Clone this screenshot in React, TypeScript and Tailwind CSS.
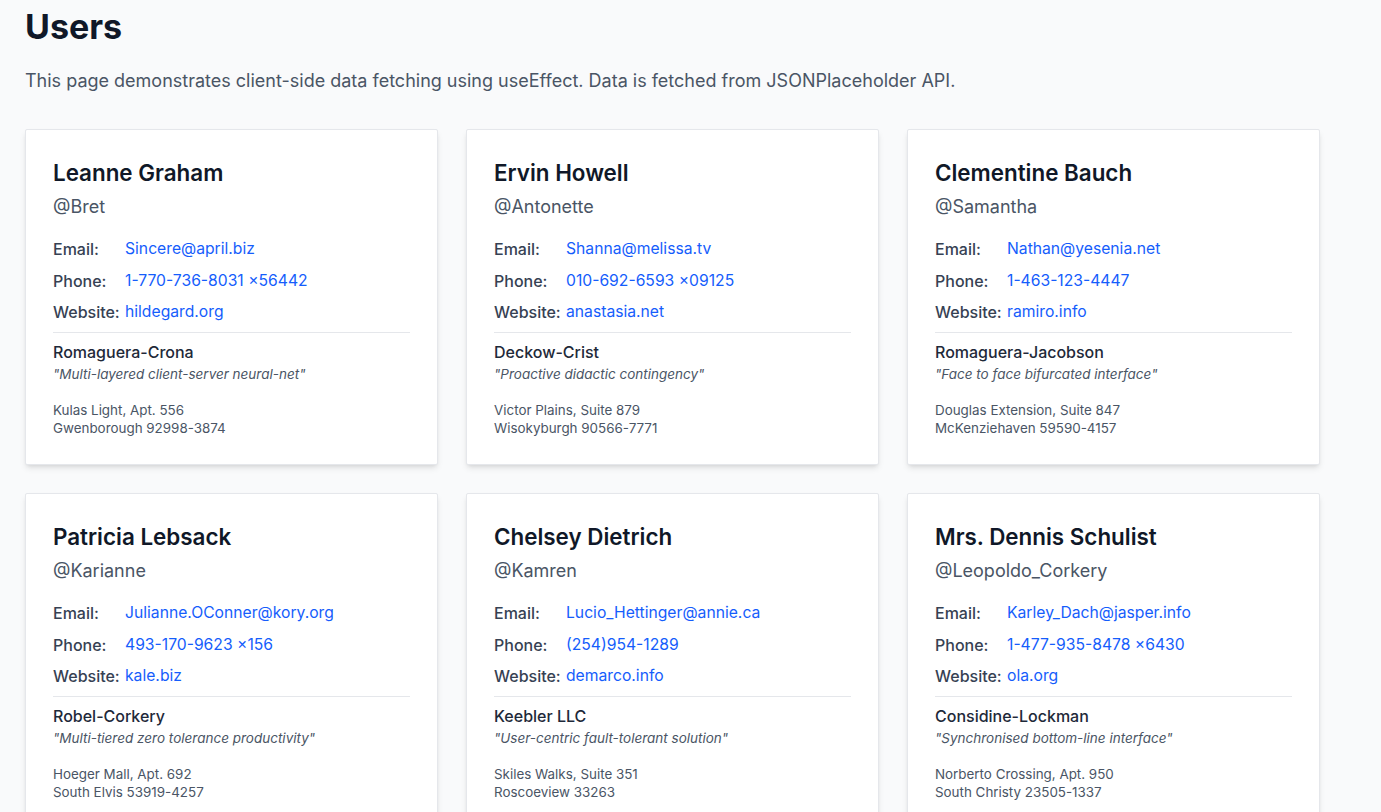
import React from "react";

type User = {
  name: string;
  username: string;
  email: string;
  phone: string;
  website: string;
  company: string;
  catchPhrase: string;
  street: string;
  city: string;
};

const users: User[] = [
  { name: "Leanne Graham", username: "Bret", email: "Sincere@april.biz", phone: "1-770-736-8031 x56442", website: "hildegard.org", company: "Romaguera-Crona", catchPhrase: "Multi-layered client-server neural-net", street: "Kulas Light, Apt. 556", city: "Gwenborough 92998-3874" },
  { name: "Ervin Howell", username: "Antonette", email: "Shanna@melissa.tv", phone: "010-692-6593 x09125", website: "anastasia.net", company: "Deckow-Crist", catchPhrase: "Proactive didactic contingency", street: "Victor Plains, Suite 879", city: "Wisokyburgh 90566-7771" },
  { name: "Clementine Bauch", username: "Samantha", email: "Nathan@yesenia.net", phone: "1-463-123-4447", website: "ramiro.info", company: "Romaguera-Jacobson", catchPhrase: "Face to face bifurcated interface", street: "Douglas Extension, Suite 847", city: "McKenziehaven 59590-4157" },
  { name: "Patricia Lebsack", username: "Karianne", email: "Julianne.OConner@kory.org", phone: "493-170-9623 x156", website: "kale.biz", company: "Robel-Corkery", catchPhrase: "Multi-tiered zero tolerance productivity", street: "Hoeger Mall, Apt. 692", city: "South Elvis 53919-4257" },
  { name: "Chelsey Dietrich", username: "Kamren", email: "Lucio_Hettinger@annie.ca", phone: "(254)954-1289", website: "demarco.info", company: "Keebler LLC", catchPhrase: "User-centric fault-tolerant solution", street: "Skiles Walks, Suite 351", city: "Roscoeview 33263" },
  { name: "Mrs. Dennis Schulist", username: "Leopoldo_Corkery", email: "Karley_Dach@jasper.info", phone: "1-477-935-8478 x6430", website: "ola.org", company: "Considine-Lockman", catchPhrase: "Synchronised bottom-line interface", street: "Norberto Crossing, Apt. 950", city: "South Christy 23505-1337" },
];

function Row({ label, value }: { label: string; value: string }) {
  return (
    <div className="flex h-6 items-center leading-6">
      <span className="w-[72px] shrink-0 text-base font-medium text-gray-700">{label}</span>
      <span className="text-[15.7px] text-blue-600">{value}</span>
    </div>
  );
}

function Card({ u }: { u: User }) {
  return (
    <div className="rounded-[2px] border border-gray-200 bg-white px-[27px] pt-[27px] pb-[27px] shadow-md">
      <h2 className="text-[22.4px] font-semibold leading-8 text-gray-900">{u.name}</h2>
      <p className="mt-1 text-lg leading-7 text-gray-600">@{u.username}</p>
      <div className="mt-4 flex flex-col gap-[7.5px]">
        <Row label="Email:" value={u.email} />
        <Row label="Phone:" value={u.phone.replace(" x", " \u00d7")} />
        <Row label="Website:" value={u.website} />
      </div>
      <div className="mt-2 border-t border-gray-200 pt-[7px]">
        <p className="text-base font-medium leading-6 text-gray-800">{u.company}</p>
        <p className="text-[13.5px] italic leading-5 text-gray-600">"{u.catchPhrase}"</p>
        <div className="mt-[17px] text-[13.4px] leading-[18px] text-gray-600">
          <p>{u.street}</p>
          <p>{u.city}</p>
        </div>
      </div>
    </div>
  );
}

export default function App() {
  return (
    <div className="min-h-screen bg-gray-50 px-[25px] pt-[7px] pb-10" style={{ fontFamily: "Inter, 'Noto Sans', sans-serif" }}>
      <h1 className="text-[34px] font-bold leading-10 text-gray-900">Users</h1>
      <p className="mt-5 text-lg leading-7 text-gray-600">
        This page demonstrates client-side data fetching using useEffect. Data is fetched from JSONPlaceholder API.
      </p>
      <div className="mt-[34px] grid w-[1295px] grid-cols-3 gap-[28px]">
        {users.map((u) => (
          <Card key={u.username} u={u} />
        ))}
      </div>
    </div>
  );
}
